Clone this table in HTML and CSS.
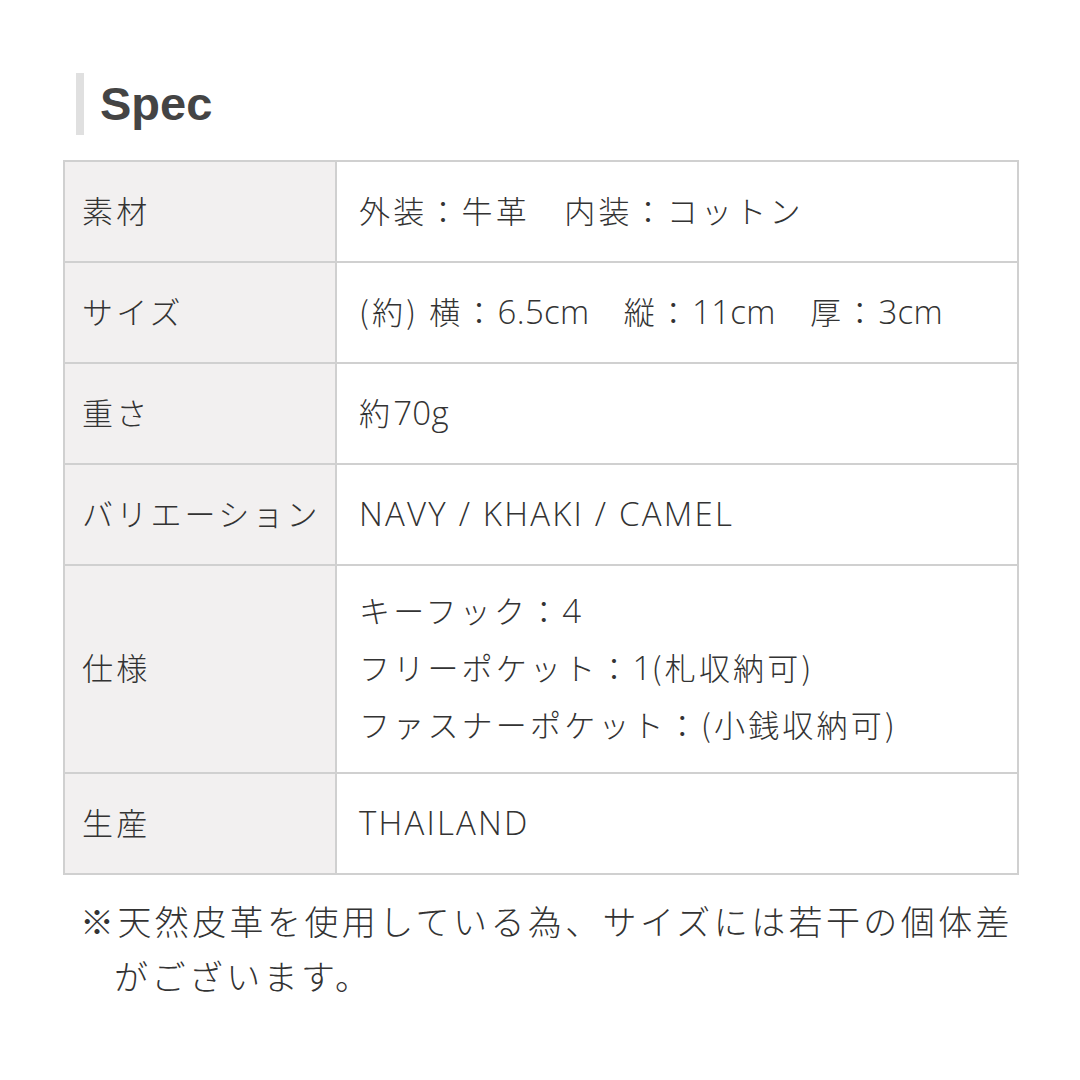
FILE: index.html
```html
<!DOCTYPE html>
<html lang="ja">
<head>
<meta charset="utf-8">
<link rel="stylesheet" href="styles.css">
</head>
<body>
<div class="page">
  <h2 class="heading">Spec</h2>
  <table class="spec">
    <tr><th>素材</th><td>外装：牛革　内装：コットン</td></tr>
    <tr><th>サイズ</th><td>(約) 横：<span class="en">6.5cm</span>　縦：<span class="en">11cm</span>　厚：<span class="en">3cm</span></td></tr>
    <tr><th>重さ</th><td>約<span class="en">70g</span></td></tr>
    <tr><th>バリエーション</th><td><span class="en caps">NAVY / KHAKI / CAMEL</span></td></tr>
    <tr class="multi"><th>仕様</th><td>キーフック：<span class="en">4</span><br>フリーポケット：<span class="en">1</span>(札収納可)<br>ファスナーポケット：(小銭収納可)</td></tr>
    <tr><th>生産</th><td><span class="en caps">THAILAND</span></td></tr>
  </table>
  <p class="note">※天然皮革を使用している為、サイズには若干の個体差がございます。</p>
</div>
</body>
</html>
```
FILE: styles.css
```css
html, body {
  margin: 0;
  padding: 0;
  background: #fff;
}
body {
  font-family: "Noto Sans CJK JP", "Noto Sans", sans-serif;
  color: #333;
}
.page {
  padding: 73px 61px 0 63px;
}
.heading {
  margin: 0 0 25px 13px;
  padding-left: 16px;
  border-left: 8px solid #e0e0e0;
  font-family: "Liberation Sans", Arial, sans-serif;
  font-weight: bold;
  font-size: 47px;
  line-height: 62px;
  color: #444;
}
.spec {
  width: 956px;
  border-collapse: collapse;
  border: 2px solid #d0d0d0;
}
.spec th, .spec td {
  border: 2px solid #d0d0d0;
  font-size: 31px;
  font-weight: 300;
  letter-spacing: 3.2px;
  line-height: 56px;
  text-align: left;
  vertical-align: middle;
  height: 101px;
  box-sizing: border-box;
  padding: 0 0 3px;
}
.spec th {
  width: 272px;
  background: #f2f0f0;
  padding-left: 17px;
}
.spec td {
  padding-left: 22px;
}
.spec .multi th, .spec .multi td {
  height: auto;
  padding-top: 16px;
  padding-bottom: 20px;
}
.en {
  font-family: "Open Sans", "Noto Sans", sans-serif;
  font-size: 33px;
  font-weight: 300;
  letter-spacing: 0.3px;
}
.en.caps {
  letter-spacing: 2.2px;
}
.note {
  margin: 18px 0 0 17px;
  padding-left: 1em;
  text-indent: -1em;
  font-size: 34px;
  font-weight: 300;
  letter-spacing: 3.4px;
  line-height: 55px;
  width: 930px;
}
```
